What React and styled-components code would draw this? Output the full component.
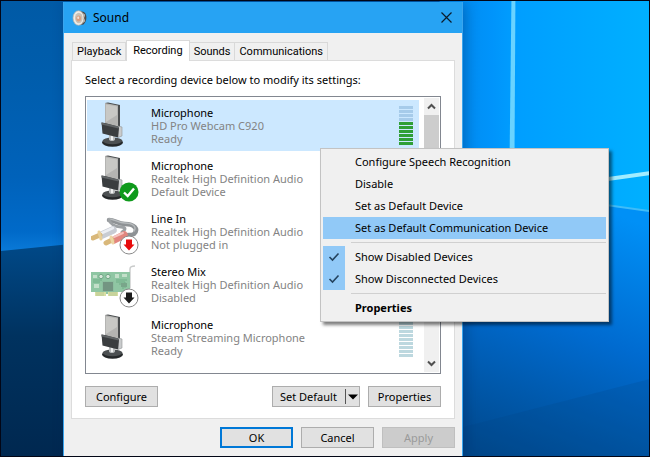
import React from "react";
import styled, { createGlobalStyle } from "styled-components";

const GlobalStyle = createGlobalStyle`
  * {
    box-sizing: border-box;
  }

  body {
    margin: 0;
    font-family: "Noto Sans", "Open Sans", sans-serif;
    font-size: 11px;
    line-height: 16px;
    color: #000000;
  }

  button {
    font: inherit;
    color: inherit;
  }
`;

const Desktop = styled.div`
  position: relative;
  display: flex;
  min-height: 100vh;
  padding: 1px 0 0 62px;
  border: 1px solid #020616;
  overflow: hidden;
  background-color: #0058a8;
`;

const WallpaperSvg = styled.svg`
  position: absolute;
  top: 0;
  left: 0;
  width: 100%;
  height: 100%;
`;

const Window = styled.main`
  position: relative;
  display: flex;
  flex-direction: column;
  flex: 0 1 400px;
  border: 1px solid #3aa5ee;
  border-width: 0 1px;
  background-color: #f0f0f0;
  box-shadow: 3px 2px 12px rgba(0, 30, 80, 0.3);
`;

const TitleBar = styled.header`
  display: flex;
  align-items: center;
  height: 31px;
  padding: 0 8px;
  background-color: #27a3f3;
`;

const Title = styled.h1`
  flex: 1;
  margin: 0 0 0 5px;
  font-size: 12px;
  font-weight: 400;
`;

const CloseButton = styled.button`
  display: flex;
  padding: 2px;
  border: 0;
  background: none;
`;

const Body = styled.div`
  flex: 1;
  padding: 7px 7px 8px;
`;

const TabList = styled.div`
  display: flex;
  align-items: flex-end;
  padding-left: 1px;
`;

const Tab = styled.button`
  height: ${props => (props.$active ? 21 : 18)}px;
  margin-bottom: ${props => (props.$active ? -1 : 0)}px;
  padding: 0 ${props => (props.$active ? 6 : 4)}px;
  border: 1px solid #d9d9d9;
  border-bottom: 0;
  border-left-width: ${props => (props.$joined ? 0 : 1)}px;
  background-color: ${props => (props.$active ? "#ffffff" : "#f0f0f0")};
  font-family: Roboto, "Noto Sans", sans-serif;
  line-height: 16px;
  z-index: ${props => (props.$active ? 1 : 0)};
`;

const Panel = styled.section`
  padding: 11px 13px;
  border: 1px solid #dcdcdc;
  background-color: #ffffff;
`;

const Hint = styled.p`
  margin: 0 0 8px;
`;

const ListBox = styled.div`
  display: flex;
  gap: 5px;
  height: 278px;
  margin-bottom: 12px;
  padding: 1px;
  border: 1px solid #828790;
`;

const Devices = styled.ul`
  flex: 1;
  margin: 0;
  padding: 2px 0 0;
  list-style: none;
`;

const Device = styled.li`
  display: flex;
  align-items: center;
  height: 51px;
  margin-bottom: 2px;
  padding: 0 6px 0 4px;
  background-color: ${props => (props.$selected ? "#cce8ff" : "transparent")};
`;

const DeviceText = styled.div`
  flex: 1;
  margin-left: 12px;
  line-height: 13px;
  color: #838383;
`;

const DeviceName = styled.div`
  color: #000000;
`;

const Meter = styled.div`
  display: flex;
  flex-direction: column;
  gap: 1px;
`;

const MeterBar = styled.span`
  width: 14px;
  height: 3px;
  background-color: ${props =>
    props.$lit ? "#2f9f37" : props.$selected ? "#a6cbea" : "#bdd8df"};
`;

const ScrollBar = styled.div`
  display: flex;
  flex-direction: column;
  width: 15px;
  background-color: #f0f0f0;
`;

const ScrollButton = styled.button`
  display: flex;
  align-items: center;
  justify-content: center;
  width: 15px;
  height: 17px;
  padding: 0;
  border: 0;
  background: none;
`;

const ScrollTrack = styled.div`
  flex: 1;
`;

const ScrollThumb = styled.div`
  height: 70%;
  background-color: #cdcdcd;
`;

const ButtonRow = styled.div`
  display: flex;
  gap: 8px;
  justify-content: flex-end;
`;

const Button = styled.button`
  min-width: 73px;
  height: 21px;
  margin-right: ${props => (props.$first ? "auto" : 0)};
  padding: 0 6px;
  border: ${props => (props.$primary ? "2px solid #0078d7" : "1px solid #adadad")};
  background-color: #e1e1e1;
  line-height: 16px;

  &:disabled {
    border-color: #bfbfbf;
    background-color: #cccccc;
    color: #9a9a9a;
  }
`;

const SplitButton = styled(Button)`
  display: flex;
  align-items: center;
  width: 88px;
  padding: 0 1px 0 7px;
`;

const SplitLabel = styled.span`
  flex: 1;
  text-align: left;
`;

const SplitArrow = styled.span`
  display: flex;
  align-items: center;
  height: 15px;
  padding-left: 2px;
  border-left: 1px solid #555555;
`;

const Footer = styled(ButtonRow)`
  margin-top: 8px;
`;

const Menu = styled.div`
  position: absolute;
  top: 146px;
  left: 256px;
  min-width: 289px;
  padding: 2px;
  border: 1px solid #c3c3c3;
  background-color: #f0f0f0;
  box-shadow: 3px 3px 3px rgba(0, 0, 0, 0.5);
`;

const MenuItem = styled.button`
  display: flex;
  align-items: center;
  width: 100%;
  height: 22px;
  padding: 0;
  border: 0;
  background-color: ${props => (props.$active ? "#91c9f7" : "transparent")};
  font-weight: ${props => (props.$bold ? 700 : 400)};
`;

const MenuCheck = styled.span`
  display: flex;
  align-items: center;
  justify-content: center;
  width: 22px;
  height: 22px;
  margin-right: 10px;
  background-color: ${props => (props.$checked ? "#91c9f7" : "transparent")};
`;

const MenuDivider = styled.hr`
  height: 1px;
  margin: 3px 0 3px 28px;
  border: 0;
  background-color: #d0d0d0;
`;

const Wallpaper = () => (
  <WallpaperSvg viewBox="0 0 650 457" preserveAspectRatio="none" aria-hidden="true">
    <defs>
      <linearGradient id="leftSky" x1="0" y1="0" x2="0" y2="1">
        <stop offset="0" stopColor="#005aa6" />
        <stop offset="0.3" stopColor="#005dac" />
        <stop offset="0.7" stopColor="#0062ba" />
        <stop offset="0.92" stopColor="#006ac9" />
        <stop offset="1" stopColor="#0a7ad8" />
      </linearGradient>
      <linearGradient id="leftFloor" x1="0" y1="0" x2="0" y2="1">
        <stop offset="0" stopColor="#004a8a" />
        <stop offset="0.45" stopColor="#00325f" />
        <stop offset="1" stopColor="#002850" />
      </linearGradient>
      <linearGradient id="rightSky" x1="0" y1="0" x2="1" y2="0">
        <stop offset="0" stopColor="#0086ea" />
        <stop offset="0.25" stopColor="#0094fb" />
        <stop offset="0.36" stopColor="#009eff" />
        <stop offset="1" stopColor="#00b0ff" />
      </linearGradient>
      <linearGradient id="rightFloor" x1="0.2" y1="1" x2="0.5" y2="0">
        <stop offset="0" stopColor="#00488c" />
        <stop offset="0.25" stopColor="#0058aa" />
        <stop offset="0.55" stopColor="#006bd0" />
        <stop offset="1" stopColor="#0090f6" />
      </linearGradient>
    </defs>
    <rect width="120" height="252" fill="url(#leftSky)" />
    <path d="M0 251L120 239V457H0Z" fill="url(#leftFloor)" />
    <rect x="440" width="210" height="215" fill="url(#rightSky)" />
    <path d="M440 186L650 211V457H440Z" fill="url(#rightFloor)" />
    <path d="M440 434L650 380V457H440Z" fill="#00407e" opacity="0.18" />
    <path d="M512 0H516L515 170H510Z" fill="#69d3ff" />
    <path d="M600 178L650 171V175L600 182Z" fill="#a2ecff" />
    <path d="M600 203L650 210V212L600 205Z" fill="#3fbcf8" />
  </WallpaperSvg>
);

const SpeakerIcon = () => (
  <svg width="16" height="16" viewBox="0 0 16 16" aria-hidden="true">
    <path d="M8 1L12 2C15.5 5 15 11 11.5 14.5L8 15Z" fill="#4c4a48" />
    <path d="M11 3L13 4.5V7L11.5 6ZM11.5 10L13 9V11.5L11 13Z" fill="#b5b0aa" />
    <ellipse cx="6.5" cy="8" rx="5.5" ry="7.3" fill="#efece6" stroke="#b3aea6" strokeWidth="0.7" />
    <ellipse cx="6.8" cy="8" rx="3.8" ry="5.3" fill="#c9c2b8" />
    <ellipse cx="6.6" cy="8.6" rx="2.4" ry="3" fill="#d9a082" />
    <ellipse cx="6.2" cy="7.8" rx="1" ry="1.3" fill="#f3e0d2" />
  </svg>
);

const MicrophoneArt = () => (
  <g>
    <ellipse cx="21.5" cy="41.5" rx="10.5" ry="4.2" fill="#25282a" />
    <ellipse cx="21.5" cy="39.8" rx="9.8" ry="3.4" fill="#4c5052" />
    <path d="M18 33H24V38.5C23 40.5 19 40.5 18 38.5Z" fill="#b9bcbd" />
    <path d="M20 33H22V39H20Z" fill="#eef0f0" />
    <path d="M14 2L17 1.5L29 4V28L26 29Z" fill="#4a4d4f" />
    <path d="M14 2L27 4.5V28L14 25Z" fill="#b4b4b2" />
    <path d="M15 3.4L26 5.5V14L15 21Z" fill="#c8c8c5" />
    <path d="M27 25L31 26V35L27 36.5Z" fill="#c9cbcc" stroke="#909496" strokeWidth="0.6" />
    <path d="M10.5 21.5L14 22L27 25.5L28 27L27 36.5L11.5 32.5Z" fill="#3a3d3f" />
    <path d="M10.5 21.5L27.5 25.5V27.5L10.5 23.5Z" fill="#606466" />
  </g>
);

const CableArt = () => (
  <g fill="none" strokeLinecap="round">
    <path d="M18 13C24 13 27 17 34 17C43 17 48 22 43 27C40 29 36 27 33 29" stroke="#8e9295" strokeWidth="4.5" />
    <path d="M18 12C24 12 27 16 34 16C42 16 46 20 43 24" stroke="#b6babc" strokeWidth="1.4" />
    <path d="M18 13C19 16 23 20 30 20C34 20 36 22 31 25" stroke="#9da1a4" strokeWidth="3" />
    <path d="M11 28L22 23" stroke="#c8ccd3" strokeWidth="7.5" />
    <path d="M11 26L22 21" stroke="#eceff4" strokeWidth="2.5" />
    <path d="M2 31L9 28" stroke="#d9b87a" strokeWidth="5" />
    <path d="M8 25L10 32" stroke="#e8d09a" strokeWidth="3" />
    <path d="M23 33L33 28" stroke="#e2857e" strokeWidth="7.5" />
    <path d="M23 30L32 26" stroke="#f5c4be" strokeWidth="2" />
    <path d="M15 36L21 33" stroke="#d9b87a" strokeWidth="5" />
    <path d="M20 30L22 36" stroke="#ecd6a4" strokeWidth="3" />
  </g>
);

const CardArt = () => (
  <g>
    <path d="M39 28V9C39 7 40 6 44 6" fill="none" stroke="#c9cbcb" strokeWidth="1.4" />
    <path d="M0 12H39V32H27V36H17V34H15V36H4V32H0Z" fill="#8fc6a3" />
    <path d="M4 32H15V36H4ZM17 32H27V36H17Z" fill="#d9dfa4" />
    <path d="M6 32V36M8 32V36M10 32V36M12 32V36M19 32V36M21 32V36M23 32V36M25 32V36" stroke="#a7bd8c" strokeWidth="0.7" />
    <path d="M2 15H6V18H2ZM24 14H28V18H24ZM31 14H36V17H31ZM3 24H8V28H3Z" fill="#c3dfc9" />
    <circle cx="10" cy="16.5" r="2.2" fill="#d7e6da" stroke="#6fa684" />
    <circle cx="17" cy="16.5" r="2.2" fill="#d7e6da" stroke="#6fa684" />
    <rect x="12" y="22" width="10" height="9" fill="#6d8f7c" />
    <path d="M12 21V32M14 21V32M16 21V32M18 21V32M20 21V32M22 21V32" stroke="#87a994" strokeWidth="0.5" />
    <path d="M25 20H36M25 22H34V28M28 24H32V29M2 20H11M2 22H9" fill="none" stroke="#68a881" strokeWidth="0.8" />
    <rect x="30" y="23" width="6" height="4" fill="#79a68a" />
  </g>
);

const Badge = ({ kind }) => {
  if (kind === "check") {
    return (
      <g>
        <circle cx="38" cy="38" r="9.5" fill="#0f9a1c" />
        <path d="M33 38.5L36.7 42L43 34.5" fill="none" stroke="#ffffff" strokeWidth="2.4" />
      </g>
    );
  }

  return (
    <g>
      <circle cx="38" cy="38" r="9" fill="#ffffff" stroke="#8a8a8a" />
      <path
        d="M35 32.5H41V37.5H43.5L38 43.5L32.5 37.5H35Z"
        fill={kind === "unplugged" ? "#e80c0c" : "#1c1c1c"}
      />
    </g>
  );
};

const art = {
  microphone: MicrophoneArt,
  cable: CableArt,
  card: CardArt
};

const DeviceIcon = ({ type, badge }) => {
  const Art = art[type];

  return (
    <svg width="48" height="49" viewBox="0 0 48 49" aria-hidden="true">
      <Art />
      {badge && <Badge kind={badge} />}
    </svg>
  );
};

const Chevron = ({ down }) => (
  <svg width="9" height="7" viewBox="0 0 9 7" aria-hidden="true">
    <path
      d={down ? "M1 1.5L4.5 5L8 1.5" : "M1 5.5L4.5 2L8 5.5"}
      fill="none"
      stroke="#505050"
      strokeWidth="2"
    />
  </svg>
);

const CheckMark = () => (
  <svg width="12" height="10" viewBox="0 0 12 10" aria-hidden="true">
    <path d="M1.5 5L4.5 8L10.5 1.5" fill="none" stroke="#24435f" strokeWidth="1.6" />
  </svg>
);

const devices = [
  { name: "Microphone", detail: "HD Pro Webcam C920", status: "Ready", icon: "microphone", level: 6, selected: true },
  { name: "Microphone", detail: "Realtek High Definition Audio", status: "Default Device", icon: "microphone", badge: "check", level: 0 },
  { name: "Line In", detail: "Realtek High Definition Audio", status: "Not plugged in", icon: "cable", badge: "unplugged" },
  { name: "Stereo Mix", detail: "Realtek High Definition Audio", status: "Disabled", icon: "card", badge: "disabled" },
  { name: "Microphone", detail: "Steam Streaming Microphone", status: "Ready", icon: "microphone", level: 0 }
];

const tabs = ["Playback", "Recording", "Sounds", "Communications"];

const LevelMeter = ({ level, selected }) => (
  <Meter>
    {Array.from({ length: 10 }, (_, i) => (
      <MeterBar key={i} $lit={i >= 10 - level} $selected={selected} />
    ))}
  </Meter>
);

const ContextMenu = () => (
  <Menu role="menu">
    <MenuItem role="menuitem"><MenuCheck />Configure Speech Recognition</MenuItem>
    <MenuItem role="menuitem"><MenuCheck />Disable</MenuItem>
    <MenuItem role="menuitem"><MenuCheck />Set as Default Device</MenuItem>
    <MenuItem role="menuitem" $active><MenuCheck />Set as Default Communication Device</MenuItem>
    <MenuDivider />
    <MenuItem role="menuitemcheckbox" aria-checked="true">
      <MenuCheck $checked><CheckMark /></MenuCheck>
      Show Disabled Devices
    </MenuItem>
    <MenuItem role="menuitemcheckbox" aria-checked="true">
      <MenuCheck $checked><CheckMark /></MenuCheck>
      Show Disconnected Devices
    </MenuItem>
    <MenuDivider />
    <MenuItem role="menuitem" $bold><MenuCheck />Properties</MenuItem>
  </Menu>
);

const App = () => {
  return (
    <Desktop>
      <GlobalStyle />
      <Wallpaper />
      <Window>
        <TitleBar>
          <SpeakerIcon />
          <Title>Sound</Title>
          <CloseButton aria-label="Close">
            <svg width="11" height="11" viewBox="0 0 11 11">
              <path d="M0.5 0.5L10.5 10.5M10.5 0.5L0.5 10.5" stroke="#0b1c2c" strokeWidth="1.2" />
            </svg>
          </CloseButton>
        </TitleBar>

        <Body>
          <TabList role="tablist">
            {tabs.map((tab, i) => (
              <Tab
                key={tab}
                role="tab"
                aria-selected={tab === "Recording"}
                $active={tab === "Recording"}
                $joined={i > 1}
              >
                {tab}
              </Tab>
            ))}
          </TabList>

          <Panel>
            <Hint>Select a recording device below to modify its settings:</Hint>

            <ListBox>
              <Devices>
                {devices.map((device, i) => (
                  <Device key={i} $selected={device.selected}>
                    <DeviceIcon type={device.icon} badge={device.badge} />
                    <DeviceText>
                      <DeviceName>{device.name}</DeviceName>
                      <div>{device.detail}</div>
                      <div>{device.status}</div>
                    </DeviceText>
                    {device.level !== undefined && (
                      <LevelMeter level={device.level} selected={device.selected} />
                    )}
                  </Device>
                ))}
              </Devices>
              <ScrollBar>
                <ScrollButton aria-label="Scroll up"><Chevron /></ScrollButton>
                <ScrollTrack><ScrollThumb /></ScrollTrack>
                <ScrollButton aria-label="Scroll down"><Chevron down /></ScrollButton>
              </ScrollBar>
            </ListBox>

            <ButtonRow>
              <Button $first>Configure</Button>
              <SplitButton>
                <SplitLabel>Set Default</SplitLabel>
                <SplitArrow>
                  <svg width="10" height="6" viewBox="0 0 10 6" aria-hidden="true">
                    <path d="M0 0.5H10L5 5.5Z" fill="#000000" />
                  </svg>
                </SplitArrow>
              </SplitButton>
              <Button>Properties</Button>
            </ButtonRow>
          </Panel>

          <Footer>
            <Button $primary>OK</Button>
            <Button>Cancel</Button>
            <Button disabled>Apply</Button>
          </Footer>
        </Body>

        <ContextMenu />
      </Window>
    </Desktop>
  );
};

export default App;
